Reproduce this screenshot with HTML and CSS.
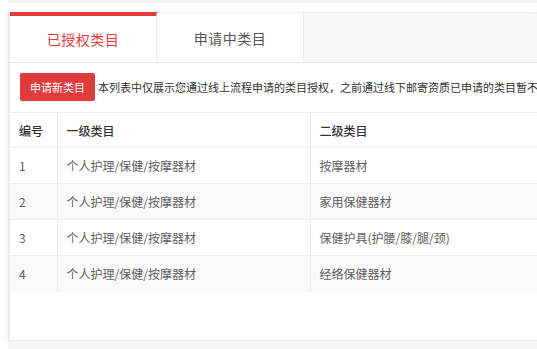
FILE: index.html
```html
<!DOCTYPE html>
<html lang="zh-CN">
<head>
    <meta charset="UTF-8">
    <meta name="viewport" content="width=device-width, initial-scale=1.0">
    <title>类目管理</title>
    <link rel="stylesheet" href="styles.css">
</head>
<body>
    <div class="top-bar"></div>

    <div class="panel">
        <div class="tabs">
            <div class="tab active">已授权类目</div>
            <div class="tab">申请中类目</div>
        </div>

        <div class="panel-body">
            <div class="toolbar">
                <button class="apply-button">申请新类目</button>
                <span class="notice">本列表中仅展示您通过线上流程申请的类目授权，之前通过线下邮寄资质已申请的类目暂不</span>
            </div>

            <table class="category-table">
                <thead>
                    <tr>
                        <th class="col-id">编号</th>
                        <th class="col-first">一级类目</th>
                        <th>二级类目</th>
                    </tr>
                </thead>
                <tbody>
                    <tr>
                        <td>1</td>
                        <td>个人护理/保健/按摩器材</td>
                        <td>按摩器材</td>
                    </tr>
                    <tr>
                        <td>2</td>
                        <td>个人护理/保健/按摩器材</td>
                        <td>家用保健器材</td>
                    </tr>
                    <tr>
                        <td>3</td>
                        <td>个人护理/保健/按摩器材</td>
                        <td>保健护具(护腰/膝/腿/颈)</td>
                    </tr>
                    <tr>
                        <td>4</td>
                        <td>个人护理/保健/按摩器材</td>
                        <td>经络保健器材</td>
                    </tr>
                </tbody>
            </table>
        </div>
    </div>

    <div class="bottom-bar"></div>
</body>
</html>
```

FILE: styles.css
```css
* {
    margin: 0;
    padding: 0;
    box-sizing: border-box;
}

html, body {
    overflow: hidden;
}

body {
    font-family: "Microsoft YaHei", "Noto Sans CJK SC", "Noto Sans", sans-serif;
    background-color: #ffffff;
    color: #333333;
    width: 537px;
    height: 349px;
}

.top-bar {
    height: 3px;
    margin-left: 8px;
    background: #f2f2f2;
}

.panel {
    margin: 9px 0 0 8px;
    height: 328px;
    border-left: 2px solid #ececec;
    box-shadow: -3px 0 4px rgba(0, 0, 0, 0.03);
    display: flex;
    flex-direction: column;
}

.tabs {
    display: flex;
    height: 51px;
    background: #f7f7f7;
    border-top: 1px solid #eeeeee;
    border-bottom: 1px solid #e8e8e8;
}

.tab {
    width: 147px;
    background: #ffffff;
    border-right: 1px solid #ececec;
    color: #555555;
    font-size: 14px;
    letter-spacing: 0.5px;
    text-align: center;
    line-height: 50px;
}

.tab.active {
    color: #e23c3c;
    border-top: 4px solid #e23c3c;
    margin-top: -1px;
    line-height: 46px;
}

.panel-body {
    flex: 1;
    background: #ffffff;
    padding-top: 10px;
}

.toolbar {
    display: flex;
    align-items: center;
    gap: 3px;
    padding-left: 10px;
    white-space: nowrap;
}

.apply-button {
    background: #e13b3b;
    color: #ffffff;
    border: none;
    border-radius: 2px;
    height: 28px;
    padding: 0 10px;
    font-family: inherit;
    font-size: 11px;
}

.notice {
    font-size: 11px;
    color: #333333;
}

.category-table {
    width: 560px;
    margin-top: 11px;
    border-collapse: collapse;
    font-size: 12px;
    table-layout: fixed;
}

.category-table th,
.category-table td {
    height: 36px;
    padding: 0 9px;
    text-align: left;
    border-top: 1px solid #eeeeee;
    border-right: 1px solid #eeeeee;
    white-space: nowrap;
}

.category-table th {
    height: 35px;
    font-weight: 500;
    color: #333333;
}

.category-table td {
    color: #5e5e5e;
}

.category-table .col-id {
    width: 47px;
}

.category-table .col-first {
    width: 253px;
}

.category-table tbody tr:nth-child(even) {
    background: #f9f9f9;
}

.bottom-bar {
    height: 9px;
    margin-left: 8px;
    background: #f5f5f5;
    border-top: 1px solid #e8e8e8;
}
```
